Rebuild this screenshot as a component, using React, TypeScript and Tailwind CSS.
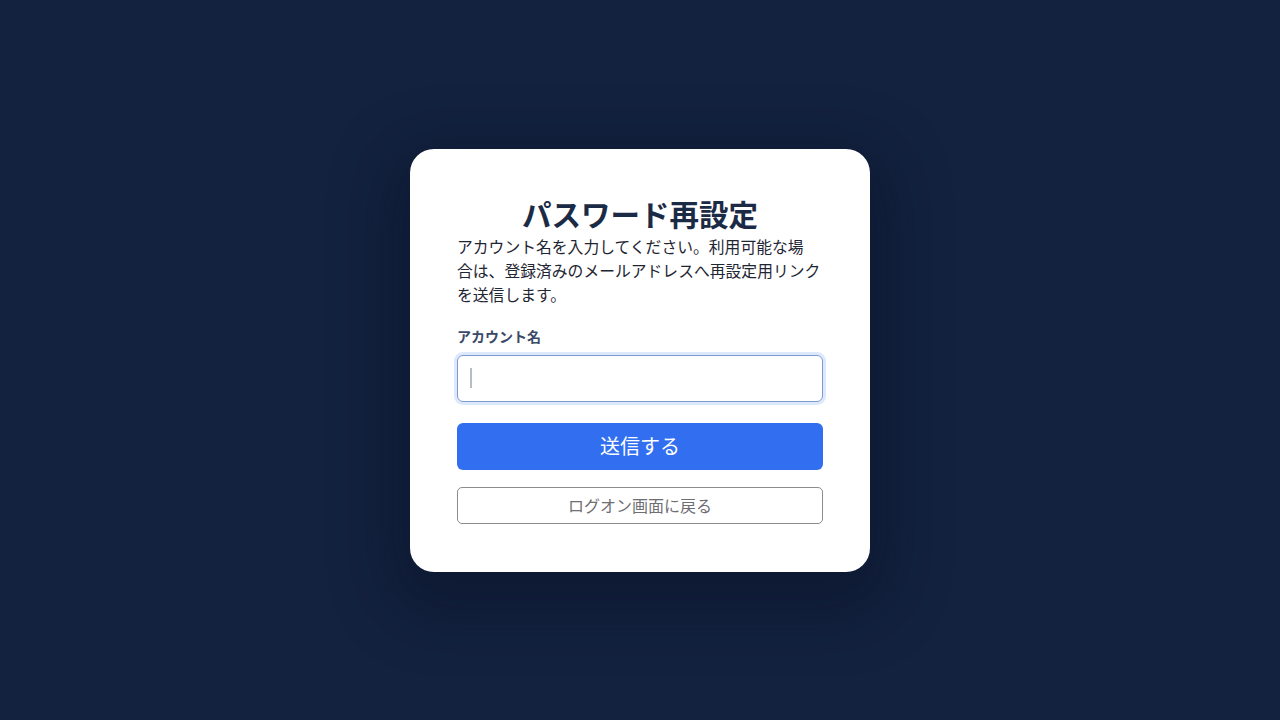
import React from "react";

export default function App() {
  return (
    <div
      className="min-h-screen w-full bg-[#13223f] flex items-center justify-center"
      style={{ fontFamily: '"Noto Sans CJK JP", "Noto Sans", sans-serif' }}
    >
      <div className="w-[460px] bg-white rounded-[24px] px-[47px] pt-[44px] pb-[48px] shadow-[0_20px_60px_20px_rgba(8,16,36,0.45)] flex flex-col">
        <h1 className="text-[29.5px] leading-[40px] font-bold text-[#1c2b45] text-center">
          パスワード再設定
        </h1>
        <p className="mt-[2px] text-[15.8px] leading-[24px] text-[#1f2633] whitespace-nowrap">
          アカウント名を入力してください。利用可能な場
          <br />
          合は、登録済みのメールアドレスへ再設定用リンク
          <br />
          を送信します。
        </p>
        <label className="mt-[19px] text-[14px] leading-[20px] font-bold text-[#3a4a66]">
          アカウント名
        </label>
        <div className="mt-[9px] h-[47px] rounded-[6px] border border-[#7d99cf] ring-[3px] ring-[#dce8fb] flex items-center px-[12px]">
          <div className="w-[1.5px] h-[20px] bg-[#b8bcc4]" />
        </div>
        <button className="mt-[21px] h-[47px] rounded-[6px] bg-[#316ff0] text-white text-[20px] leading-none flex items-center justify-center">
          送信する
        </button>
        <button className="mt-[17px] h-[37px] rounded-[5px] border border-[#8c8c8c] bg-white text-[#6e6e73] text-[16px] leading-none flex items-center justify-center">
          ログオン画面に戻る
        </button>
      </div>
    </div>
  );
}
